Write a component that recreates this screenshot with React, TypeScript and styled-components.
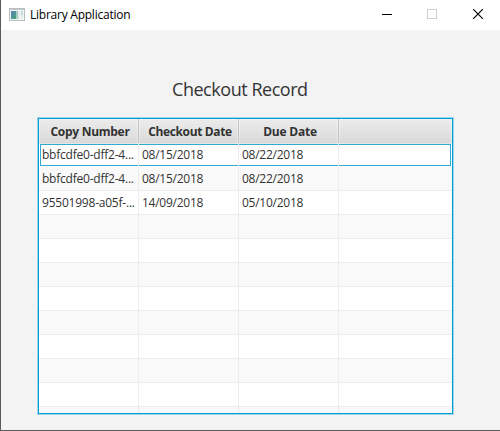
import React from 'react';
import styled, { createGlobalStyle } from 'styled-components';

const GlobalStyle = createGlobalStyle`
  * { box-sizing: border-box; }
  body { margin: 0; overflow: hidden; font-family: "Open Sans", "Noto Sans", sans-serif; }
`;

const Window = styled.div`
  width: 500px;
  height: 431px;
  display: flex;
  flex-direction: column;
  background: #f3f3f3;
  border-left: 1px solid #5a5a5a;
  border-bottom: 1px solid #5a5a5a;
`;

const TitleBar = styled.header`
  height: 30px;
  flex: none;
  display: flex;
  align-items: center;
  background: #fff;
  padding-left: 8px;
`;

const AppTitle = styled.span`
  margin-left: 5px;
  font-size: 12px;
  line-height: 16px;
  letter-spacing: -0.24px;
  color: #000;
  white-space: nowrap;
`;

const WindowControls = styled.div`
  display: flex;
  margin-left: auto;
`;

const ControlButton = styled.button<{ $width: number }>`
  width: ${p => p.$width}px;
  height: 30px;
  padding: 0 0 2px;
  border: 0;
  background: none;
  display: flex;
  align-items: center;
  justify-content: center;
`;

const Content = styled.main`
  flex: 1;
  display: flex;
  flex-direction: column;
`;

const Heading = styled.h1`
  margin: 46px 0 0 171px;
  font-size: 18px;
  line-height: 26px;
  font-weight: 400;
  letter-spacing: -0.46px;
  color: #333;
  white-space: nowrap;
`;

const TableFrame = styled.section`
  width: 415px;
  height: 296px;
  margin: 16px 0 0 37px;
  border: 1px solid #039ed3;
  box-shadow: 0 0 0 1px #9bd6ea;
  background: #fff;
  overflow: hidden;
`;

const columns = '100px 100px 100px 1fr';

const HeaderRow = styled.div`
  height: 24px;
  display: grid;
  grid-template-columns: ${columns};
  border-bottom: 1px solid #c3c3c3;
`;

const HeaderCell = styled.div<{ $last?: boolean }>`
  display: flex;
  justify-content: center;
  padding-left: 3px;
  border-right: ${p => (p.$last ? '0' : '1px solid #c3c3c3')};
  background: linear-gradient(#ececec, #d9d9d9);
  box-shadow: inset 0 0 0 1px rgba(255, 255, 255, 0.35);
  font-size: 12px;
  font-weight: 700;
  line-height: 25px;
  color: #333;
  white-space: nowrap;
`;

const HeaderText = styled.span<{ $spacing: number }>`
  letter-spacing: ${p => p.$spacing}px;
`;

const Row = styled.div<{ $odd: boolean }>`
  height: 24px;
  display: grid;
  grid-template-columns: ${columns};
  background: ${p => (p.$odd ? '#f9f9f9' : '#fff')};
  border-bottom: 1px solid #ededed;
`;

const FocusedRow = styled(Row)`
  border-bottom-color: #fff;
`;

const Cell = styled.div<{ $last?: boolean; $first?: boolean; $focused?: boolean }>`
  display: flex;
  min-width: 0;
  padding-left: 3px;
  border-right: ${p => (p.$last ? '0' : '1px solid #ededed')};
  font-size: 12px;
  line-height: 23px;
  letter-spacing: ${p => (p.$first ? '-0.22px' : '-0.26px')};
  color: #333;
  white-space: nowrap;
  ${p =>
    p.$focused &&
    `
    position: relative;
    &::after {
      content: '';
      position: absolute;
      top: 1px;
      bottom: 0;
      left: ${p.$first ? '1px' : '0'};
      right: ${p.$last ? '1px' : '0'};
      border: solid #2fabd3;
      border-width: 1px ${p.$last ? '1px' : '0'} 1px ${p.$first ? '1px' : '0'};
    }
  `}
`;

const headers = [
  { label: 'Copy Number', spacing: -0.28 },
  { label: 'Checkout Date', spacing: -0.36 },
  { label: 'Due Date', spacing: -0.22 },
  { label: '', spacing: 0 },
];

const records = [
  ['bbfcdfe0-dff2-4...', '08/15/2018', '08/22/2018', ''],
  ['bbfcdfe0-dff2-4...', '08/15/2018', '08/22/2018', ''],
  ['95501998-a05f-...', '14/09/2018', '05/10/2018', ''],
];
const emptyRecord = ['', '', '', ''];
const rows = Array.from({ length: 12 }, (_, i) => records[i] ?? emptyRecord);

const AppIcon = () => (
  <svg width="16" height="14" viewBox="0 0 16 14" shapeRendering="crispEdges">
    <defs>
      <linearGradient id="screen" x1="0" y1="0" x2="1" y2="1">
        <stop offset="0" stopColor="#5b86b4" />
        <stop offset="1" stopColor="#45a578" />
      </linearGradient>
    </defs>
    <rect x="0.5" y="0.5" width="15" height="12" fill="#f3f4f4" stroke="#b9bec3" />
    <rect x="1" y="1" width="14" height="1" fill="#c6cbd1" />
    <rect x="2" y="3" width="6" height="8" fill="url(#screen)" />
    <rect x="7" y="3" width="2" height="8" fill="#a9c9c4" />
    <rect x="9" y="3" width="2" height="8" fill="#e6ebea" />
    <rect x="12" y="3" width="2" height="4" fill="#bfdcd4" />
    <rect x="12" y="7" width="2" height="4" fill="#e2ece6" />
  </svg>
);

export default function App() {
  return (
    <>
      <GlobalStyle />
      <Window>
        <TitleBar>
          <AppIcon />
          <AppTitle>Library Application</AppTitle>
          <WindowControls>
            <ControlButton $width={42} aria-label="Minimize">
              <svg width="10" height="10" shapeRendering="crispEdges">
                <rect y="5" width="10" height="1" fill="#000" />
              </svg>
            </ControlButton>
            <ControlButton $width={48} aria-label="Maximize">
              <svg width="10" height="10" shapeRendering="crispEdges">
                <rect x="0.5" y="0.5" width="9" height="9" fill="none" stroke="#ccc" />
              </svg>
            </ControlButton>
            <ControlButton $width={44} aria-label="Close">
              <svg width="10" height="10">
                <path d="M0.2 0.2L9.8 9.8M9.8 0.2L0.2 9.8" stroke="#000" strokeWidth="1.2" />
              </svg>
            </ControlButton>
          </WindowControls>
        </TitleBar>
        <Content>
          <Heading>Checkout Record</Heading>
          <TableFrame>
            <HeaderRow>
              {headers.map((h, i) => (
                <HeaderCell key={i} $last={i === 3}>
                  <HeaderText $spacing={h.spacing}>{h.label}</HeaderText>
                </HeaderCell>
              ))}
            </HeaderRow>
            {rows.map((row, r) => {
              const RowShell = r === 0 ? FocusedRow : Row;
              return (
                <RowShell key={r} $odd={r % 2 === 1}>
                  {row.map((text, c) => (
                    <Cell key={c} $first={c === 0} $last={c === 3} $focused={r === 0}>
                      {text}
                    </Cell>
                  ))}
                </RowShell>
              );
            })}
          </TableFrame>
        </Content>
      </Window>
    </>
  );
}
